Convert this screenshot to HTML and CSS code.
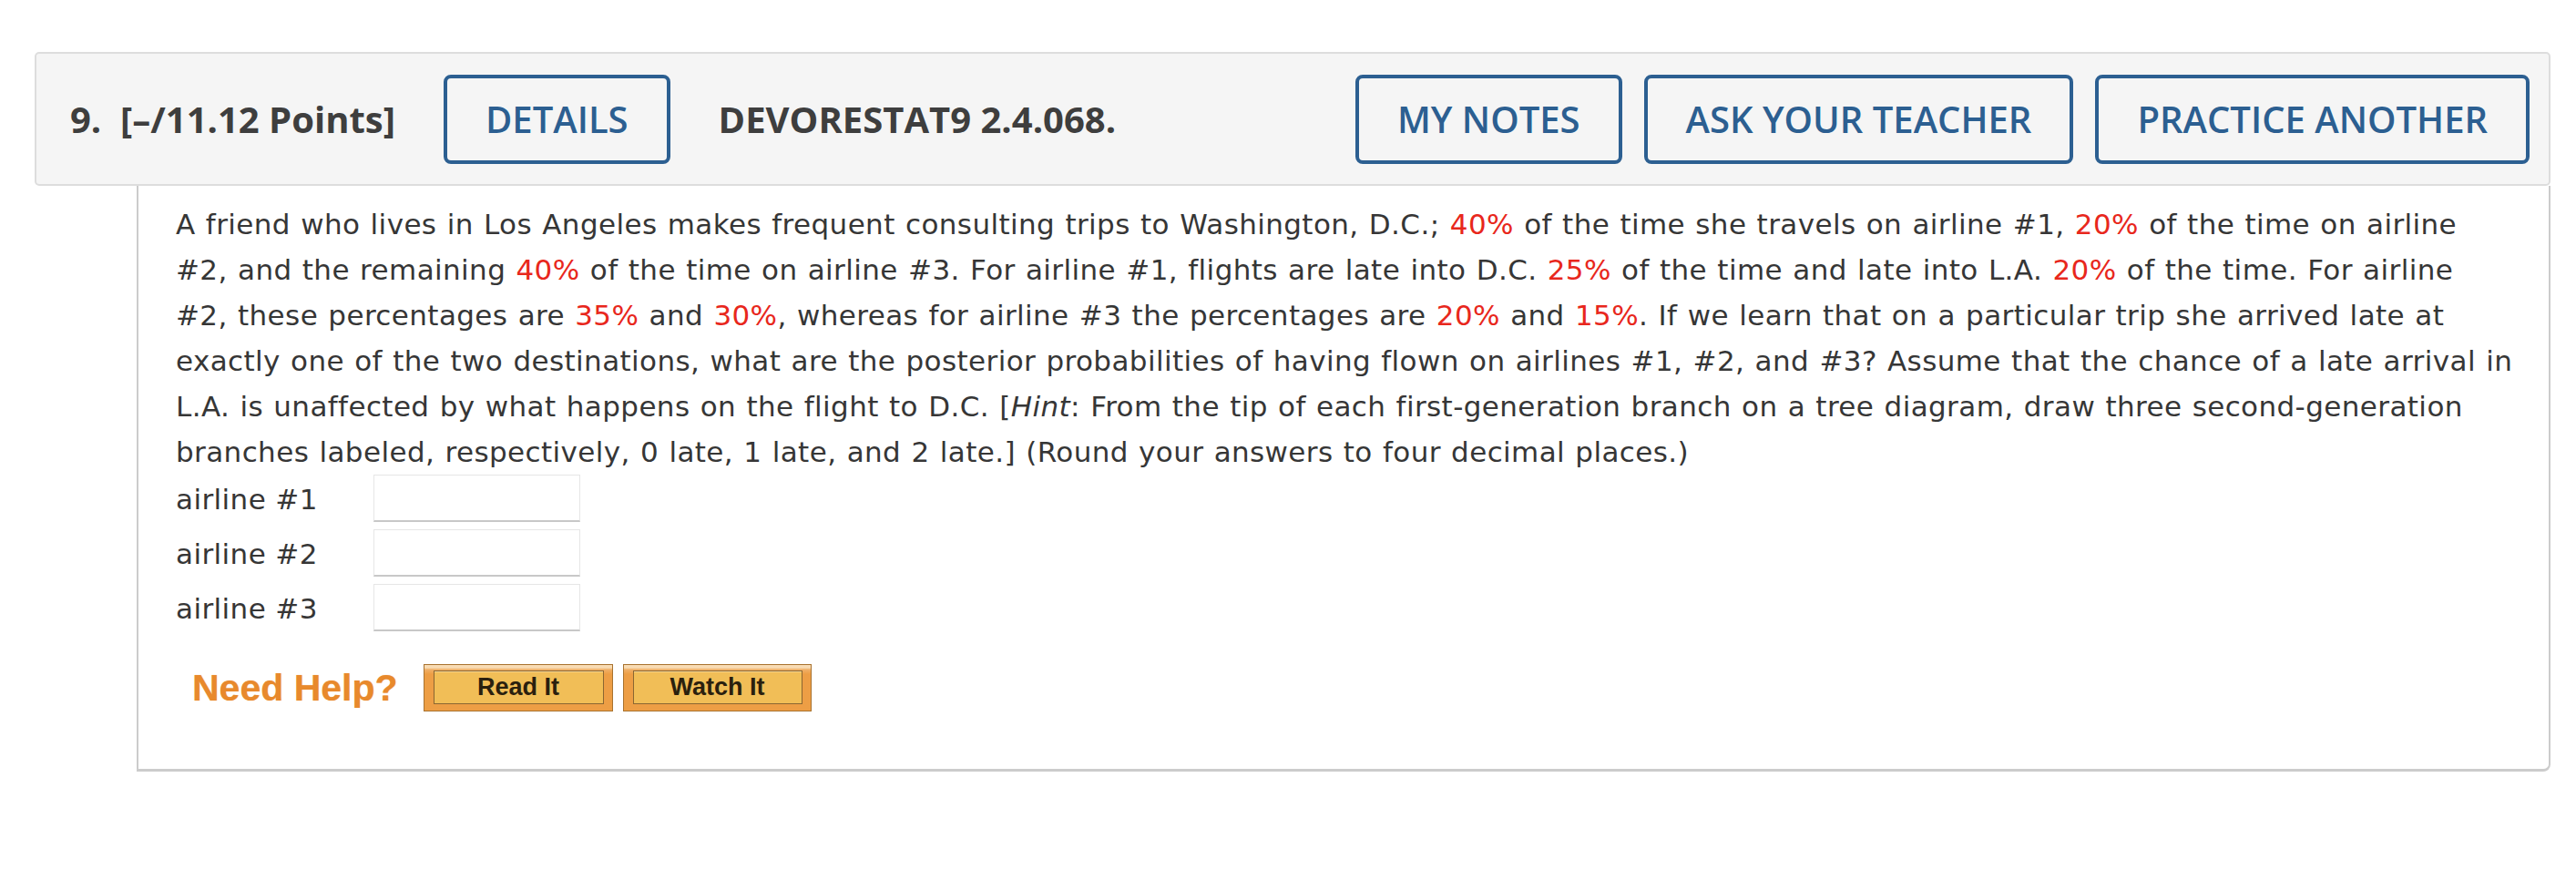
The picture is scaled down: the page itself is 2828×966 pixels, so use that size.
FILE: index.html
```html
<!DOCTYPE html>
<html lang="en">
<head>
<meta charset="utf-8">
<title>Question 9</title>
<link rel="stylesheet" href="styles.css">
</head>
<body>
<div class="question">
  <div class="q-header">
    <div class="q-title">9.&nbsp; [–/11.12 Points]</div>
    <button class="hbtn details">DETAILS</button>
    <div class="q-code">DEVORESTAT9 2.4.068.</div>
    <div class="hactions">
      <button class="hbtn">MY NOTES</button>
      <button class="hbtn">ASK YOUR TEACHER</button>
      <button class="hbtn">PRACTICE ANOTHER</button>
    </div>
  </div>
  <div class="q-body">
    <p class="q-text">A friend who lives in Los Angeles makes frequent consulting trips to Washington, D.C.; <span class="red">40%</span> of the time she travels on airline #1, <span class="red">20%</span> of the time on airline<br>#2, and the remaining <span class="red">40%</span> of the time on airline #3. For airline #1, flights are late into D.C. <span class="red">25%</span> of the time and late into L.A. <span class="red">20%</span> of the time. For airline<br>#2, these percentages are <span class="red">35%</span> and <span class="red">30%</span>, whereas for airline #3 the percentages are <span class="red">20%</span> and <span class="red">15%</span>. If we learn that on a particular trip she arrived late at<br>exactly one of the two destinations, what are the posterior probabilities of having flown on airlines #1, #2, and #3? Assume that the chance of a late arrival in<br>L.A. is unaffected by what happens on the flight to D.C. [<i>Hint</i>: From the tip of each first-generation branch on a tree diagram, draw three second-generation<br>branches labeled, respectively, 0 late, 1 late, and 2 late.] (Round your answers to four decimal places.)</p>
    <div class="answers">
      <div class="arow"><span class="alabel">airline #1</span><span class="abox"></span></div>
      <div class="arow"><span class="alabel">airline #2</span><span class="abox"></span></div>
      <div class="arow"><span class="alabel">airline #3</span><span class="abox"></span></div>
    </div>
    <div class="help">
      <span class="need">Need Help?</span>
      <span class="hb read"><span class="hb-in">Read It</span></span>
      <span class="hb watch"><span class="hb-in">Watch It</span></span>
    </div>
  </div>
</div>
</body>
</html>
```

FILE: styles.css
```css
html, body {
  margin: 0;
  padding: 0;
  background: #ffffff;
}

.question {
  margin: 57px 28px 0 38px;
}

.q-header {
  height: 147px;
  box-sizing: border-box;
  border: 2px solid #dddddd;
  border-radius: 5px;
  background: #f5f5f5;
  display: flex;
  align-items: center;
  padding: 0 21px 0 37px;
}

.q-title,
.q-code {
  font-family: "Open Sans", "Liberation Sans", sans-serif;
  font-weight: 700;
  font-size: 40px;
  color: #3e3e3e;
  white-space: nowrap;
}

.hbtn {
  height: 98px;
  box-sizing: border-box;
  border: 4px solid #2c5f91;
  border-radius: 8px;
  background: transparent;
  color: #2c5f91;
  font-family: "Open Sans", "Liberation Sans", sans-serif;
  font-weight: 600;
  font-size: 40px;
  padding: 0 42px;
  white-space: nowrap;
}

.details {
  margin-left: 53px;
}

.q-code {
  margin-left: 53px;
}

.hactions {
  margin-left: auto;
  display: flex;
  gap: 24px;
}

.q-body {
  margin-left: 112px;
  height: 643px;
  box-sizing: border-box;
  border-left: 2px solid #cccccc;
  border-right: 2px solid #cccccc;
  border-bottom: 3px solid #cccccc;
  border-bottom-right-radius: 8px;
  padding: 17px 30px 0 41px;
}

.q-text {
  margin: 0;
  font-family: "DejaVu Sans", Verdana, sans-serif;
  font-size: 31px;
  line-height: 50px;
  letter-spacing: 0.4px;
  word-spacing: 1px;
  color: #363636;
  white-space: nowrap;
}

.red {
  color: #e8271c;
}

.answers {
  display: flex;
  flex-direction: column;
  gap: 8px;
}

.arow {
  display: flex;
  align-items: center;
  height: 52px;
}

.alabel {
  width: 217px;
  padding-top: 2px;
  font-family: "DejaVu Sans", Verdana, sans-serif;
  font-size: 31px;
  letter-spacing: 0.4px;
  color: #363636;
}

.abox {
  width: 227px;
  height: 52px;
  box-sizing: border-box;
  border: 1px solid #e6e6e6;
  border-bottom: 2px solid #c8c8c8;
  background: #ffffff;
}

.help {
  display: flex;
  align-items: center;
  margin-top: 36px;
  padding-left: 18px;
}

.need {
  font-family: "Liberation Sans", Arial, sans-serif;
  font-weight: 700;
  font-size: 41px;
  color: #e8892c;
  margin-right: 28px;
  text-shadow: 0 0 1px rgba(232, 137, 44, 0.6);
}

.hb {
  width: 208px;
  height: 52px;
  box-sizing: border-box;
  border: 1px solid #a8722f;
  background: linear-gradient(#f8dcb4 0, #f8dcb4 3px, #f0b068 5px, #ed9e45 10px, #ed9e45 100%);
  padding: 6px 9px 7px 10px;
  display: flex;
}

.watch {
  width: 207px;
  margin-left: 11px;
}

.hb-in {
  flex: 1;
  box-sizing: border-box;
  border: 1px solid #8a6632;
  background: #f1be57;
  box-shadow: inset 0 1px 0 #f7d590;
  display: flex;
  align-items: center;
  justify-content: center;
  font-family: "Liberation Sans", Arial, sans-serif;
  font-weight: 700;
  font-size: 27px;
  color: #2a200e;
}
```
